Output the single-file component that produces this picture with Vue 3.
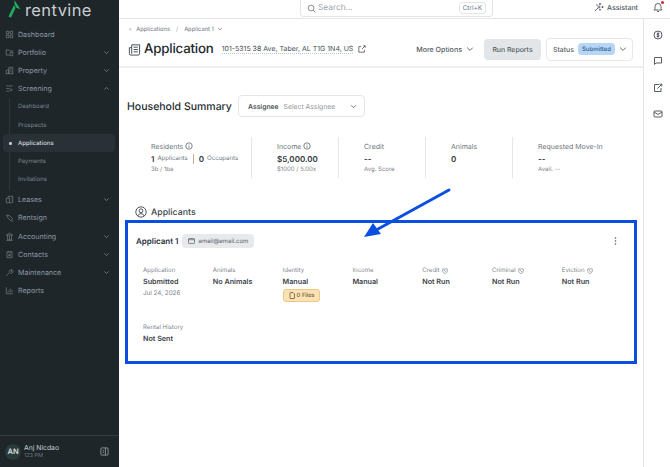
<script setup>
const navIcons = {
  grid: 'M2 2h4v4H2zM8 2h4v4H8zM2 8h4v4H2zM8 8h4v4H8z',
  folder: 'M2 11V3h4l1 1.500h5V6M2 11h5M8 7h4v5H8z',
  building: 'M2 12V7l4-2v7M6 12V2h6v10M1 12h12M8 4h2M8 6.500h2M8 9h2',
  screen: 'M2 3h10M2 7h5M2 11h5M9 7v4M9 11l3-3',
  lease: 'M2 12V5h3V2h7v10zM5 5h2v7M9 5h1M9 8h1',
  sign: 'M2 3l5 1 5 5-3 3-5-5zM5 5l.5.5M10 12l3 1',
  bank: 'M2 5l5-3 5 3zM3 12h8M2 13h10M4 6v5M7 6v5M10 6v5',
  contact: 'M3 3h8v9H3zM5 1.500v3M9 1.500v3M5 10c0-3 4-3 4 0M7 6.500a1 1 0 1 0 .01 0',
  wrench: 'M2 12l5-5M7 7a3 3 0 0 1 4-4L9.500 4.500l1 1L12 4a3 3 0 0 1-4 4',
  chart: 'M2 2v10h10M5 10V7M8 10V4M11 10V6',
}

const navItems = [
  { label: 'Dashboard', icon: 'grid' },
  { label: 'Portfolio', icon: 'folder', chevron: 'down' },
  { label: 'Property', icon: 'building', chevron: 'down' },
  { label: 'Screening', icon: 'screen', chevron: 'up' },
]
const subItems = ['Dashboard', 'Prospects', 'Applications', 'Payments', 'Invitations']
const navItemsAfter = [
  { label: 'Leases', icon: 'lease', chevron: 'down' },
  { label: 'Rentsign', icon: 'sign' },
  { label: 'Accounting', icon: 'bank', chevron: 'down' },
  { label: 'Contacts', icon: 'contact', chevron: 'down' },
  { label: 'Maintenance', icon: 'wrench', chevron: 'down' },
  { label: 'Reports', icon: 'chart' },
]

const fields = [
  { label: 'Application', value: 'Submitted', note: 'Jul 24, 2026' },
  { label: 'Animals', value: 'No Animals' },
  { label: 'Identity', value: 'Manual', files: '0 Files' },
  { label: 'Income', value: 'Manual' },
  { label: 'Credit', value: 'Not Run', shield: true },
  { label: 'Criminal', value: 'Not Run', shield: true },
  { label: 'Eviction', value: 'Not Run', shield: true },
  { label: 'Rental History', value: 'Not Sent' },
]
</script>

<template>
  <div class="app">
    <aside class="sidebar">
      <div class="logo">
        <svg width="13" height="18" viewBox="0 0 13 18">
          <path d="M6.500 0L12.500 9.500 8 7.500 6.500 4z" fill="#1fae5e" />
          <path d="M6 5L7.500 8 3 17.500 0.500 16.500z" fill="#1fae5e" />
        </svg>
        <span class="logo-text">rentvine</span>
      </div>

      <nav class="nav">
        <a v-for="item in navItems" :key="item.label" class="nav-row">
          <svg class="nav-icon" viewBox="0 0 14 14"><path :d="navIcons[item.icon]" /></svg>
          <span class="nav-label">{{ item.label }}</span>
          <svg v-if="item.chevron" class="nav-chevron" viewBox="0 0 8 8">
            <path :d="item.chevron === 'up' ? 'M1.500 5.200L4 2.800l2.500 2.400' : 'M1.500 2.800L4 5.200l2.500-2.400'" />
          </svg>
        </a>
        <div class="sub-nav">
          <a
            v-for="sub in subItems"
            :key="sub"
            class="sub-row"
            :class="{ active: sub === 'Applications' }"
          >{{ sub }}</a>
        </div>
        <a v-for="item in navItemsAfter" :key="item.label" class="nav-row">
          <svg class="nav-icon" viewBox="0 0 14 14"><path :d="navIcons[item.icon]" /></svg>
          <span class="nav-label">{{ item.label }}</span>
          <svg v-if="item.chevron" class="nav-chevron" viewBox="0 0 8 8">
            <path d="M1.500 2.800L4 5.200l2.500-2.400" />
          </svg>
        </a>
      </nav>

      <div class="user">
        <span class="avatar">AN</span>
        <div class="user-text">
          <div class="user-name">Anj Nicdao</div>
          <div class="user-meta">123 PM</div>
        </div>
        <svg class="user-toggle" width="9" height="9" viewBox="0 0 10 10">
          <rect x="1" y="1" width="8" height="8" rx="1" />
          <path d="M6 1v8M3 4h1.500M3 6h1.500" />
        </svg>
      </div>
    </aside>

    <div class="main">
      <header class="topbar">
        <div class="search">
          <svg width="9" height="9" viewBox="0 0 10 10" class="line-icon">
            <circle cx="4.500" cy="4.500" r="3.200" />
            <path d="M7 7l2.200 2.200" />
          </svg>
          <span class="search-text">Search...</span>
          <span class="kbd">Ctrl+K</span>
        </div>
        <div class="assistant">
          <svg width="10" height="10" viewBox="0 0 10 10" class="line-icon">
            <path d="M1 9l3-3M6 1v2M5 2h2M8.500 4v2M7.500 5h2M3 2.500v1M2.500 3h1M6 7v1.500M5.300 7.700h1.400" />
            <circle cx="5" cy="5" r="1" />
          </svg>
          <span>Assistant</span>
        </div>
        <div class="bell">
          <svg width="10" height="11" viewBox="0 0 10 11" class="line-icon">
            <path d="M1 8h8L8 6.500V4.500a3 3 0 0 0-6 0v2zM4 9.500h2" />
          </svg>
          <span class="bell-dot"></span>
        </div>
      </header>

      <div class="body">
        <div class="content">
          <section class="page-head">
            <div class="crumbs">
              <span class="crumb-back">‹</span>
              <span>Applications</span>
              <span class="crumb-sep">/</span>
              <span>Applicant 1</span>
              <svg width="6" height="6" viewBox="0 0 8 8" class="line-icon"><path d="M1.500 2.800L4 5.200l2.500-2.400" /></svg>
            </div>
            <div class="title-row">
              <svg width="13" height="13" viewBox="0 0 14 14" class="title-icon">
                <path d="M4 2h8.500v9.500a1.500 1.500 0 0 1-1.500 1.500H3a1.500 1.500 0 0 1-1.500-1.500V5H4zM4 5v6.500M6 4.500h4.500M6 7h4.500M6 9.500h4.500" />
              </svg>
              <h1 class="title">Application</h1>
              <a class="address">101-5315 38 Ave, Taber, AL T1G 1N4, US</a>
              <svg width="8" height="8" viewBox="0 0 10 10" class="ext-icon">
                <path d="M8 6v3H1V2h3M5 5l4-4M6.500 1H9v2.500" />
              </svg>
              <div class="actions">
                <button class="more">
                  More Options
                  <svg width="8" height="8" viewBox="0 0 8 8" class="line-icon"><path d="M1.200 2.600L4 5.400l2.800-2.800" /></svg>
                </button>
                <button class="run">Run Reports</button>
                <div class="status">
                  <span class="status-label">Status</span>
                  <span class="status-badge">Submitted</span>
                  <svg width="8" height="8" viewBox="0 0 8 8" class="line-icon"><path d="M1.200 2.600L4 5.400l2.800-2.800" /></svg>
                </div>
              </div>
            </div>
          </section>

          <section class="summary">
            <div class="summary-head">
              <h2>Household Summary</h2>
              <div class="assignee">
                <b>Assignee</b>
                <span>Select Assignee</span>
                <svg width="7" height="7" viewBox="0 0 8 8" class="line-icon"><path d="M1.200 2.600L4 5.400l2.800-2.800" /></svg>
              </div>
            </div>

            <div class="stats">
              <div class="stat first">
                <div class="stat-label">Residents
                  <svg width="8" height="8" viewBox="0 0 10 10" class="line-icon"><circle cx="5" cy="5" r="4" /><path d="M5 4.500V7.200M5 2.800v.6" /></svg>
                </div>
                <div class="stat-value residents">
                  <b>1</b><small>Applicants</small><i></i><b>0</b><small>Occupants</small>
                </div>
                <div class="stat-note">3b / 1ba</div>
              </div>
              <div class="stat">
                <div class="stat-label">Income
                  <svg width="8" height="8" viewBox="0 0 10 10" class="line-icon"><circle cx="5" cy="5" r="4" /><path d="M5 4.500V7.200M5 2.800v.6" /></svg>
                </div>
                <div class="stat-value"><b>$5,000.00</b></div>
                <div class="stat-note">$1000 / 5.00x</div>
              </div>
              <div class="stat">
                <div class="stat-label">Credit</div>
                <div class="stat-value"><b>--</b></div>
                <div class="stat-note">Avg. Score</div>
              </div>
              <div class="stat">
                <div class="stat-label">Animals</div>
                <div class="stat-value"><b>0</b></div>
              </div>
              <div class="stat last">
                <div class="stat-label">Requested Move-In</div>
                <div class="stat-value"><b>--</b></div>
                <div class="stat-note">Avail. --</div>
              </div>
            </div>
          </section>

          <section class="applicants">
            <div class="applicants-head">
              <svg width="12" height="12" viewBox="0 0 12 12" class="person-icon">
                <circle cx="6" cy="6" r="5.200" />
                <circle cx="6" cy="4.800" r="1.900" />
                <path d="M2.800 10c.6-3 5.800-3 6.400 0" />
              </svg>
              <h2>Applicants</h2>
            </div>

            <div class="card">
              <div class="card-head">
                <h3>Applicant 1</h3>
                <span class="email">
                  <svg width="7" height="6" viewBox="0 0 8 7" class="line-icon"><rect x=".5" y=".5" width="7" height="6" rx="1" /><path d="M.5 2h7" /></svg>
                  email@email.com
                </span>
                <svg class="kebab" width="3" height="8" viewBox="0 0 3 8">
                  <circle cx="1.500" cy="1" r=".8" /><circle cx="1.500" cy="4" r=".8" /><circle cx="1.500" cy="7" r=".8" />
                </svg>
              </div>
              <div class="fields">
                <div v-for="field in fields" :key="field.label" class="field">
                  <div class="field-label">
                    {{ field.label }}
                    <svg v-if="field.shield" width="6" height="6" viewBox="0 0 8 8" class="line-icon">
                      <path d="M1 1.200h6v3c0 1.500-1.500 2.600-3 3.300-1.500-.7-3-1.800-3-3.300zM2.500 2.500l3 3" />
                    </svg>
                  </div>
                  <div class="field-value">{{ field.value }}</div>
                  <div v-if="field.note" class="field-note">{{ field.note }}</div>
                  <span v-if="field.files" class="files">
                    <svg width="6" height="7" viewBox="0 0 6 7"><path d="M1.500.5H4L5.500 2v4a.5.5 0 0 1-.5.5H1.500A.5.5 0 0 1 1 6V1a.5.5 0 0 1 .5-.5z" /></svg>
                    {{ field.files }}
                  </span>
                </div>
              </div>
            </div>
          </section>
        </div>

        <div class="rail">
          <svg width="10" height="10" viewBox="0 0 10 10" class="rail-icon">
            <circle cx="5" cy="5" r="4" /><path d="M5 2.300v5.400M6.300 3.500H4.400a.8.8 0 0 0 0 1.500h1.200a.8.8 0 0 1 0 1.500H3.700" />
          </svg>
          <svg width="10" height="10" viewBox="0 0 10 10" class="rail-icon">
            <path d="M1.500 1.500h7v5.500h-5.500l-1.500 1.500z" />
          </svg>
          <svg width="10" height="10" viewBox="0 0 10 10" class="rail-icon">
            <path d="M6 1.500H1.500v7h6.500V5M4.500 5.500l4-4M6.500 1.200h2.300v2.300" />
          </svg>
          <svg width="10" height="10" viewBox="0 0 10 10" class="rail-icon">
            <rect x="1" y="2" width="8" height="6" rx="1" /><path d="M1 3l4 2.500L9 3" />
          </svg>
        </div>
      </div>
    </div>

    <svg class="arrow" width="100" height="60" viewBox="0 0 100 60">
      <path d="M85 5L14 44" />
      <path class="arrow-head" d="M0 52L9 38 17 49z" />
    </svg>
  </div>
</template>

<style>
html, body {
  margin: 0;
  background: #fff;
}
</style>

<style scoped>
.app {
  position: relative;
  display: flex;
  width: 670px;
  height: 467px;
  overflow: hidden;
  background: #fff;
  color: #2b3238;
  font-family: Inter, "Liberation Sans", sans-serif;
  text-rendering: geometricPrecision;
}

h1, h2, h3 {
  margin: 0;
}

svg {
  flex: none;
}

.line-icon {
  fill: none;
  stroke: currentColor;
  stroke-width: 0.9;
}

.sidebar {
  display: flex;
  flex-direction: column;
  flex: none;
  width: 119px;
  box-sizing: border-box;
  background: #1f262a;
  color: #8c98a5;
}

.logo {
  display: flex;
  align-items: flex-start;
  gap: 4px;
  height: 25px;
  padding-left: 8px;
  box-sizing: border-box;
}

.logo-text {
  color: #c8ced2;
  font-size: 16.500px;
  line-height: 20px;
  letter-spacing: 0.4px;
}

.nav {
  flex: 1;
  padding-top: 0;
}

.nav-row {
  display: flex;
  align-items: center;
  height: 18.200px;
  padding: 0 9px 0 5px;
  font-size: 7.100px;
}

.nav-icon {
  width: 9px;
  height: 9px;
  margin-right: 4px;
  fill: none;
  stroke: #7c8690;
  stroke-width: 1;
}

.nav-label {
  flex: 1;
}

.nav-chevron {
  width: 7px;
  height: 7px;
  fill: none;
  stroke: #7c8690;
  stroke-width: 0.9;
}

.sub-nav {
  display: flex;
  flex-direction: column;
  margin-left: 9px;
  padding-bottom: 2px;
  border-left: 1px solid #2e363b;
}

.sub-row {
  position: relative;
  display: flex;
  align-items: center;
  height: 18.200px;
  padding-left: 8px;
  color: #76838f;
  font-size: 6px;
}

.sub-row.active {
  margin: 0 4px 0 -7px;
  padding-left: 15px;
  border-radius: 4px;
  background: #2a3136;
  color: #d5dade;
  font-weight: 500;
}

.sub-row.active::before {
  content: "";
  position: absolute;
  left: 6px;
  top: 8px;
  width: 2.500px;
  height: 2.500px;
  border-radius: 50%;
  background: #c5cbd0;
}

.user {
  display: flex;
  align-items: center;
  height: 31px;
  padding: 0 10px 0 5px;
  border-top: 1px solid #363d42;
}

.avatar {
  display: flex;
  align-items: center;
  justify-content: center;
  width: 16px;
  height: 16px;
  margin-right: 3px;
  border-radius: 50%;
  background: #2a3a38;
  color: #d5dade;
  font-size: 7.500px;
  font-weight: 600;
}

.user-text {
  flex: 1;
}

.user-name {
  color: #c8ced2;
  font-size: 6.800px;
  line-height: 9px;
}

.user-meta {
  color: #687680;
  font-size: 5.500px;
  line-height: 9px;
}

.user-toggle {
  fill: none;
  stroke: #aab2b8;
  stroke-width: 0.8;
}

.main {
  flex: 1;
  display: flex;
  flex-direction: column;
  min-width: 0;
}

.topbar {
  display: flex;
  align-items: flex-start;
  flex: none;
  height: 19px;
  box-sizing: border-box;
  border-bottom: 1px solid #e4e6e8;
}

.search {
  display: flex;
  align-items: center;
  gap: 2px;
  width: 193px;
  height: 17px;
  margin-left: 181px;
  padding: 0 6px 0 6px;
  box-sizing: border-box;
  border: 1px solid #e2e4e6;
  border-top: 0;
  border-radius: 0 0 4px 4px;
  color: #6b747c;
}

.search-text {
  flex: 1;
  color: #9aa2a9;
  font-size: 8.300px;
}

.kbd {
  padding: 1px 3px;
  border: 1px solid #e2e4e6;
  border-radius: 3px;
  color: #6b747c;
  font-size: 6.400px;
}

.assistant {
  display: flex;
  align-items: center;
  gap: 3px;
  height: 14px;
  margin-left: 101px;
  color: #4c555c;
  font-size: 7px;
  font-weight: 500;
}

.bell {
  position: relative;
  display: flex;
  margin: 2px 0 0 15px;
  color: #4c555c;
}

.bell-dot {
  position: absolute;
  top: -1px;
  right: -1px;
  width: 3px;
  height: 3px;
  border-radius: 50%;
  background: #e02020;
}

.body {
  flex: 1;
  display: flex;
  min-height: 0;
}

.content {
  flex: 1;
  min-width: 0;
}

.rail {
  display: flex;
  flex-direction: column;
  align-items: center;
  gap: 16.400px;
  flex: none;
  width: 27px;
  box-sizing: border-box;
  padding-top: 11px;
  padding-left: 1px;
  border-left: 1px solid #e4e6e8;
}

.rail-icon {
  fill: none;
  stroke: #444c53;
  stroke-width: 0.9;
}

.page-head {
  height: 49px;
  box-sizing: border-box;
  border-bottom: 2px solid #eceef0;
}

.crumbs {
  display: flex;
  align-items: center;
  gap: 3px;
  height: 20px;
  padding-left: 10px;
  color: #6c757d;
  font-size: 5.800px;
}

.crumb-back {
  margin-right: 2px;
}

.crumb-sep {
  margin: 0 3px;
  color: #9aa2a9;
}

.title-row {
  display: flex;
  align-items: center;
  height: 20px;
  padding-left: 9px;
}

.title-icon {
  margin-right: 3px;
  fill: none;
  stroke: #3b4349;
  stroke-width: 1;
}

.title {
  margin-right: 8px;
  color: #20272c;
  font-size: 13.300px;
  font-weight: 500;
  letter-spacing: -0.2px;
}

.address {
  margin-right: 5px;
  border-bottom: 1px dotted #c3c8cc;
  color: #474f56;
  font-size: 7px;
  line-height: 9px;
}

.ext-icon {
  fill: none;
  stroke: #4c555c;
  stroke-width: 1;
}

.actions {
  display: flex;
  align-items: center;
  margin-left: auto;
  margin-right: 10px;
}

.more {
  display: flex;
  align-items: center;
  gap: 4px;
  margin-right: 10px;
  padding: 0;
  border: 0;
  background: none;
  color: #525b62;
  font: 500 7.100px Inter, sans-serif;
  text-rendering: geometricPrecision;
}

.run {
  width: 57px;
  height: 21px;
  margin-right: 5px;
  padding: 0;
  border: 0;
  border-radius: 4px;
  background: #e3e6e8;
  color: #525b62;
  font: 500 6.900px Inter, sans-serif;
  text-rendering: geometricPrecision;
}

.status {
  display: flex;
  align-items: center;
  gap: 4px;
  width: 87px;
  height: 23px;
  padding: 0 5px 0 6px;
  box-sizing: border-box;
  border: 1px solid #e6e8ea;
  border-radius: 4px;
  color: #525b62;
  font-size: 6.900px;
  font-weight: 500;
}

.status-badge {
  padding: 2.500px 4px;
  border-radius: 4px;
  background: #b7d6f5;
  color: #2f5f92;
  font-size: 6px;
}

.summary-head {
  display: flex;
  align-items: center;
  gap: 0;
  height: 22px;
  margin: 27px 0 0 8px;
}

.summary-head h2 {
  width: 111px;
  color: #262d33;
  font-size: 10.500px;
  font-weight: 500;
  white-space: nowrap;
}

.assignee {
  display: flex;
  align-items: center;
  width: 127px;
  height: 22px;
  padding: 0 7px 0 9px;
  box-sizing: border-box;
  border: 1px solid #e4e6e8;
  border-radius: 4px;
  color: #8f979e;
  font-size: 6.800px;
}

.assignee b {
  margin-right: 5px;
  color: #4c555c;
  font-weight: 600;
}

.assignee span {
  flex: 1;
}

.assignee svg {
  color: #4c555c;
}

.stats {
  display: flex;
  margin: 20px 0 0 7px;
  height: 41px;
}

.stat {
  width: 87px;
  padding-left: 25px;
  padding-top: 4px;
  box-sizing: border-box;
  border-right: 1px solid #e4e6e8;
}

.stat.first {
  width: 126px;
}

.stat.last {
  border-right: 0;
  width: 110px;
}

.stat-label {
  display: flex;
  align-items: center;
  gap: 2px;
  height: 10px;
  color: #6c757d;
  font-size: 7px;
  white-space: nowrap;
}

.stat-label svg {
  color: #4c555c;
}

.stat-value {
  display: flex;
  align-items: center;
  height: 13px;
  margin-top: 1px;
  color: #2f363c;
  font-size: 8px;
  white-space: nowrap;
}

.stat-value b {
  font-weight: 600;
}

.residents small {
  margin-left: 3px;
  color: #6c757d;
  font-size: 6.100px;
}

.residents i {
  display: block;
  width: 1px;
  height: 10px;
  margin: 0 5px;
  background: #c9a98a;
}

.stat-note {
  margin-top: 1px;
  color: #7d858c;
  font-size: 6px;
  line-height: 8px;
  white-space: nowrap;
}

.applicants-head {
  display: flex;
  align-items: center;
  gap: 4px;
  height: 14px;
  margin: 27px 0 0 16px;
}

.person-icon {
  fill: none;
  stroke: #3b4349;
  stroke-width: 0.9;
}

.applicants-head h2 {
  color: #3b4349;
  font-size: 8.800px;
  font-weight: 500;
}

.card {
  width: 512px;
  height: 144px;
  margin: 1px 0 0 6px;
  box-sizing: border-box;
  border: 3.500px solid #0b4fe0;
}

.card-head {
  display: flex;
  align-items: center;
  height: 22px;
  margin: 7px 17px 0 8px;
}

.card-head h3 {
  margin-right: 4px;
  color: #2b3238;
  font-size: 8px;
  font-weight: 600;
}

.email {
  display: flex;
  align-items: center;
  gap: 3px;
  height: 14px;
  padding: 0 6px 0 6px;
  border-radius: 4px;
  background: #e7e9eb;
  color: #5a636a;
  font-size: 6px;
}

.kebab {
  margin-left: auto;
  fill: #4c555c;
}

.fields {
  display: grid;
  grid-template-columns: repeat(7, 69.800px);
  grid-auto-rows: 57px;
  margin: 14px 0 0 15px;
}

.field-label {
  display: flex;
  align-items: center;
  gap: 2px;
  height: 9px;
  color: #7d858c;
  font-size: 6.100px;
}

.field-value {
  margin-top: 2px;
  color: #3a4147;
  font-size: 7.200px;
  font-weight: 600;
  line-height: 9px;
}

.field-note {
  margin-top: 2.500px;
  color: #7d858c;
  font-size: 6.300px;
  line-height: 8px;
}

.files {
  display: flex;
  align-items: center;
  gap: 2px;
  width: fit-content;
  height: 13px;
  margin-top: 2.500px;
  padding: 0 4px 0 5px;
  box-sizing: border-box;
  border: 1px solid #eec883;
  border-radius: 3px;
  background: #fbe2b5;
  color: #6b5a3c;
  font-size: 5.800px;
  font-weight: 500;
}

.files svg {
  fill: none;
  stroke: #6b5a3c;
  stroke-width: 0.8;
}

.arrow {
  position: absolute;
  left: 364px;
  top: 185px;
  fill: none;
}

.arrow path {
  stroke: #0b4fe0;
  stroke-width: 3;
  stroke-linecap: round;
}

.arrow .arrow-head {
  fill: #0b4fe0;
  stroke: none;
}
</style>
